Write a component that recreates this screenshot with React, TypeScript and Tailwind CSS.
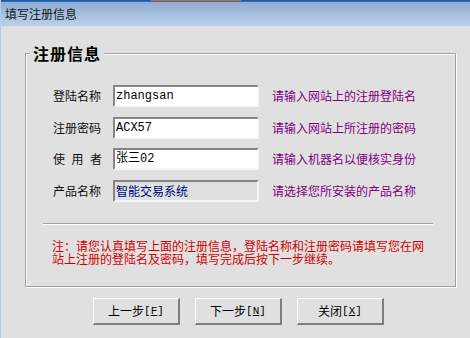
import React from "react";

const cjk = { fontFamily: '"Noto Sans CJK SC", "Noto Sans", sans-serif' };
const mono = { fontFamily: '"Liberation Mono", "Noto Sans CJK SC", monospace' };

function Field({ label, value, hint, disabled }: { label: React.ReactNode; value: string; hint: string; disabled?: boolean }) {
  return (
    <div className="flex items-center h-[22px]">
      <div className="w-[60px] text-[12px] leading-[12px] text-[#101010]" style={cjk}>{label}</div>
      <div
        className={
          "w-[146px] h-[22px] border-2 border-t-[#858585] border-l-[#858585] border-b-[#f6f6f6] border-r-[#f6f6f6] flex items-center pl-[1px] text-[12px] leading-[14px] " +
          (disabled ? "bg-[#e0e0e0] text-[#000080]" : "bg-white text-black")
        }
        style={disabled ? cjk : mono}
      >
        {value}
      </div>
      <div className="ml-[13px] text-[12px] leading-[12px] text-[#800080] whitespace-nowrap" style={cjk}>{hint}</div>
    </div>
  );
}

function Btn({ text, k }: { text: string; k: string }) {
  return (
    <div className="w-[87px] h-[27px] bg-[#e0e0e0] border-t border-l border-t-white border-l-white border-b-2 border-r-2 border-b-[#7c7c7c] border-r-[#7c7c7c] flex items-center justify-center text-[12px] leading-[12px] text-black" style={cjk}>
      <span>{text}</span>
      <span style={mono} className="text-[11px]">[<span className="underline">{k}</span>]</span>
    </div>
  );
}

export default function App() {
  return (
    <div className="w-[470px] h-[338px] bg-[#e0e0e0] overflow-hidden flex flex-col border-l border-l-[#b4cce8]">
      <div className="h-[1px] flex shrink-0">
        <div className="w-[150px] bg-[#1d5aa8]" />
        <div className="w-[90px] bg-[#e0602a]" />
        <div className="flex-1 bg-[#1d5aa8]" />
      </div>
      <div className="h-[1px] bg-[#2a6cc0] shrink-0" />
      <div className="h-[24px] shrink-0 bg-gradient-to-b from-[#91acce] to-[#b9d1ec] flex items-center pl-[4px] text-[12px] text-[#161616]" style={cjk}>
        填写注册信息
      </div>
      <div className="pl-[24px] pt-[27px]">
        <div className="relative w-[431px] h-[234px] border border-[#a0a0a0] shadow-[inset_1px_1px_0_#ffffff,1px_1px_0_#ffffff]">
          <div className="absolute left-[4px] top-[-10px] px-[3px] bg-[#e0e0e0] text-[16px] leading-[18px] font-bold tracking-[1px] text-black" style={cjk}>
            注册信息
          </div>
          <div className="pl-[27px] pt-[31px] flex flex-col gap-[9.5px]">
            <Field label="登陆名称" value="zhangsan" hint="请输入网站上的注册登陆名" />
            <Field label="注册密码" value="ACX57" hint="请输入网站上所注册的密码" />
            <Field label={<span className="flex w-[49px] justify-between"><span>使</span><span>用</span><span>者</span></span>} value="张三02" hint="请输入机器名以便核实身份" />
            <Field label="产品名称" value="智能交易系统" hint="请选择您所安装的产品名称" disabled />
          </div>
          <div className="ml-[17px] mt-[21px] w-[390px] h-[2px] border-t border-t-[#a0a0a0] border-b border-b-white" />
          <div className="ml-[26px] mt-[14px] text-[12px] leading-[13px] text-[#d00000] whitespace-nowrap" style={cjk}>
            <div>注：请您认真填写上面的注册信息，登陆名称和注册密码请填写您在网</div>
            <div>站上注册的登陆名及密码，填写完成后按下一步继续。</div>
          </div>
        </div>
      </div>
      <div className="flex pl-[92px] pt-[11px] gap-[15px]">
        <Btn text="上一步" k="F" />
        <Btn text="下一步" k="N" />
        <Btn text="关闭" k="X" />
      </div>
    </div>
  );
}
